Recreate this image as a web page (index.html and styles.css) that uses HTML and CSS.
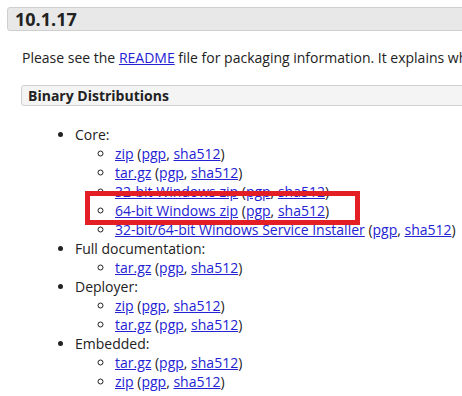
FILE: index.html
```html
<!DOCTYPE html>
<html>
  <head>
    <meta charset="utf-8" />
    <title>Tomcat 10.1.17 downloads</title>
    <link rel="stylesheet" href="styles.css">
  </head>
  <body>
    <div class="release">
      <h3 class="release-title">10.1.17</h3>
      <div class="release-body">
        <p>
          Please see the <a href="#">README</a> file for packaging information.
          It explains what every distribution contains.
        </p>

        <h4 class="dist-title">Binary Distributions</h4>
        <ul class="dist-list">
          <li>
            Core:
            <ul>
              <li><a href="#">zip</a> (<a href="#">pgp</a>, <a href="#">sha512</a>)</li>
              <li><a href="#">tar.gz</a> (<a href="#">pgp</a>, <a href="#">sha512</a>)</li>
              <li><a href="#">32-bit Windows zip</a> (<a href="#">pgp</a>, <a href="#">sha512</a>)</li>
              <li class="marked">
                <a href="#">64-bit Windows zip</a> (<a href="#">pgp</a>, <a href="#">sha512</a>)
                <span class="highlight"></span>
              </li>
              <li><a href="#">32-bit/64-bit Windows Service Installer</a> (<a href="#">pgp</a>, <a href="#">sha512</a>)</li>
            </ul>
          </li>
          <li>
            Full documentation:
            <ul>
              <li><a href="#">tar.gz</a> (<a href="#">pgp</a>, <a href="#">sha512</a>)</li>
            </ul>
          </li>
          <li>
            Deployer:
            <ul>
              <li><a href="#">zip</a> (<a href="#">pgp</a>, <a href="#">sha512</a>)</li>
              <li><a href="#">tar.gz</a> (<a href="#">pgp</a>, <a href="#">sha512</a>)</li>
            </ul>
          </li>
          <li>
            Embedded:
            <ul>
              <li><a href="#">tar.gz</a> (<a href="#">pgp</a>, <a href="#">sha512</a>)</li>
              <li><a href="#">zip</a> (<a href="#">pgp</a>, <a href="#">sha512</a>)</li>
            </ul>
          </li>
        </ul>
      </div>
    </div>
  </body>
</html>
```

FILE: styles.css
```css
html {
  overflow: hidden;
}

body {
  margin: 0;
  font-family: "Open Sans", "Liberation Sans", sans-serif;
  font-size: 14px;
  line-height: 19px;
  color: #222;
  white-space: nowrap;
}

a {
  color: #2323d4;
}

.release {
  width: 900px;
  padding: 7px 0 0 7px;
}

.release-title {
  margin: 0;
  height: 22px;
  line-height: 22px;
  padding: 0 7px;
  font-size: 18px;
  font-weight: bold;
  background-color: #e8e8e8;
  border: 1px solid #cfcfcf;
  border-radius: 3px;
}

.release-body {
  padding-left: 15px;
}

.release-body p {
  margin: 17px 0 0 0;
}

.dist-title {
  margin: 18px 0 0 -1px;
  height: 19px;
  line-height: 19px;
  padding: 0 6px;
  font-size: 14px;
  font-weight: bold;
  background-color: #f4f4f4;
  border: 1px solid #cfcfcf;
  border-radius: 3px;
}

.dist-list {
  margin: 19px 0 0 0;
  padding-left: 53px;
}

.dist-list ul {
  margin: 0;
  padding-left: 40px;
}

.marked {
  position: relative;
}

.highlight {
  position: absolute;
  left: -30px;
  top: -10px;
  width: 275px;
  height: 34px;
  box-sizing: border-box;
  border: 5px solid #e31e24;
}
```
